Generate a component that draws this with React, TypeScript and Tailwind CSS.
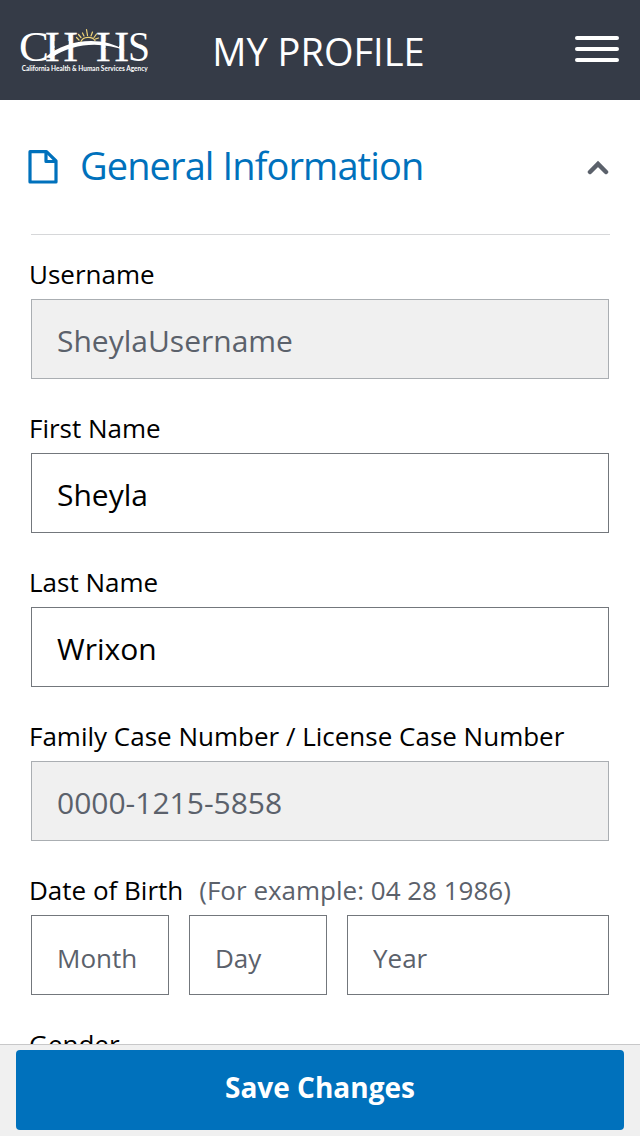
import React from "react";

function Logo() {
  return (
    <svg width="134" height="50" viewBox="0 0 134 50" className="block" role="img">
      <defs>
        <clipPath id="stems">
          <path d="M25 0H42V17H36.700V25H42V50H25Z M46 0H62V50H46V25H50.600V17H46Z M73 0H92V17H87.700V25H92V50H73Z M97 0H113V50H97V25H101V17H97Z" />
        </clipPath>
      </defs>
      <g fill="#fff" fontFamily="Liberation Serif, serif" fontSize="43">
        <text x="1" y="36.500" textLength="30" lengthAdjust="spacingAndGlyphs">C</text>
        <g clipPath="url(#stems)" stroke="#fff" strokeWidth="0.300">
          <text x="27" y="36.500" textLength="33" lengthAdjust="spacingAndGlyphs">H</text>
          <text x="78" y="36.500" textLength="33" lengthAdjust="spacingAndGlyphs">H</text>
        </g>
        <text x="110" y="36.500" textLength="22" lengthAdjust="spacingAndGlyphs">S</text>
      </g>
      <path d="M27 33.500C49 14.500 84 11.500 107 26.500C84 17.500 56 18 33 34Z" fill="#fff" />
      <g stroke="#f0d478" strokeWidth="1.200" fill="none" strokeLinecap="round">
        <path d="M63 17.500C65 12.500 74 12 77 16.500M61 16L58.500 13.500M63 13.500L60.500 10.500M66 12L64.500 9M69.500 11.500L68.500 5.500M73 12L74.500 8M76 13.500L78.500 10M77.500 15L80.500 14" />
      </g>
      <text x="3.700" y="46.500" fill="#fff" fontFamily="Lato, sans-serif" fontSize="6.700" fontWeight="700" textLength="126" lengthAdjust="spacingAndGlyphs">
        California Health &amp; Human Services Agency
      </text>
    </svg>
  );
}

function Field({ label, value, disabled = false }: { label: string; value: string; disabled?: boolean }) {
  return (
    <div className="mb-[29px]">
      <label className="-ml-0.5 block h-[45px] pt-[2px] text-[26px] leading-[36px] whitespace-nowrap">{label}</label>
      <input
        defaultValue={value}
        readOnly={disabled}
        className={
          disabled
            ? "block h-20 w-full border border-[#aaaeb2] bg-[#f0f0f0] pt-0.5 pl-[25px] text-[30px] text-[#5b616b] outline-none"
            : "block h-20 w-full border border-[#73777c] bg-white pt-0.5 pl-[25px] text-[30px] text-black outline-none"
        }
      />
    </div>
  );
}

function DateInput({ placeholder }: { placeholder: string }) {
  return (
    <input
      placeholder={placeholder}
      className="block h-20 w-full min-w-0 border border-[#73777c] bg-white pt-[5px] pl-[25px] text-[26px] outline-none placeholder:text-[#5b616b]"
    />
  );
}

export default function App() {
  return (
    <div className="flex h-screen w-full flex-col overflow-hidden bg-white font-['Open_Sans',sans-serif] text-black">
      <header className="grid h-[100px] shrink-0 grid-cols-[1fr_auto_1fr] items-center bg-[#353b47] pr-[21px] pl-[18px] text-white">
        <div className="pb-0.5">
          <Logo />
        </div>
        <h1 className="pt-0.5 text-[38px] font-normal whitespace-nowrap">MY PROFILE</h1>
        <button className="flex flex-col gap-[7px] justify-self-end pb-0.5" aria-label="Menu">
          <span className="h-1 w-11 rounded-full bg-white" />
          <span className="h-1 w-11 rounded-full bg-white" />
          <span className="h-1 w-11 rounded-full bg-white" />
        </button>
      </header>
      <main className="min-h-0 flex-1 overflow-hidden pr-[31px] pl-[31px]">
        <div className="-mr-px flex h-[135px] items-start border-b border-[#d6d7d9] pt-[39px]">
          <svg width="30" height="34" viewBox="0 0 30 34" fill="none" stroke="#0071bc" strokeWidth="3.200" strokeLinejoin="round" className="mt-[10.500px] -ml-[3px]">
            <path d="M2 1.700H18.500L28 11V32H2Z" />
            <path d="M18 2V11.500H28" />
          </svg>
          <h2 className="ml-[22px] flex-1 text-[38px] leading-[52px] font-normal tracking-[-0.9px] whitespace-nowrap text-[#0071bc]">General Information</h2>
          <svg width="22" height="16" viewBox="0 0 22 16" fill="none" stroke="#5b616b" strokeWidth="4.500" strokeLinecap="round" className="mt-[21px] mr-px">
            <path d="M3 12L11 4L19 12" />
          </svg>
        </div>
        <div className="pt-[19px]">
          <Field label="Username" value="SheylaUsername" disabled />
          <Field label="First Name" value="Sheyla" />
          <Field label="Last Name" value="Wrixon" />
          <Field label="Family Case Number / License Case Number" value="0000-1215-5858" disabled />
          <div className="mb-[29px]">
            <div className="-ml-0.5 flex h-[45px] gap-4 pt-[2px] text-[26px] leading-[36px] whitespace-nowrap">
              <span>Date of Birth</span>
              <span className="text-[#5b616b]">(For example: 04 28 1986)</span>
            </div>
            <div className="grid grid-cols-[138px_138px_262px] gap-5">
              <DateInput placeholder="Month" />
              <DateInput placeholder="Day" />
              <DateInput placeholder="Year" />
            </div>
          </div>
          <div className="-ml-0.5 pt-[2px] text-[26px] leading-[36px]">Gender</div>
        </div>
      </main>
      <footer className="h-[92px] shrink-0 border-t border-[#c8c8c9] bg-[#f0f0f0] px-4 pt-[5px]">
        <button className="h-20 w-full rounded bg-[#0071bc] pb-1.5 text-[28px] font-bold text-white">Save Changes</button>
      </footer>
    </div>
  );
}
